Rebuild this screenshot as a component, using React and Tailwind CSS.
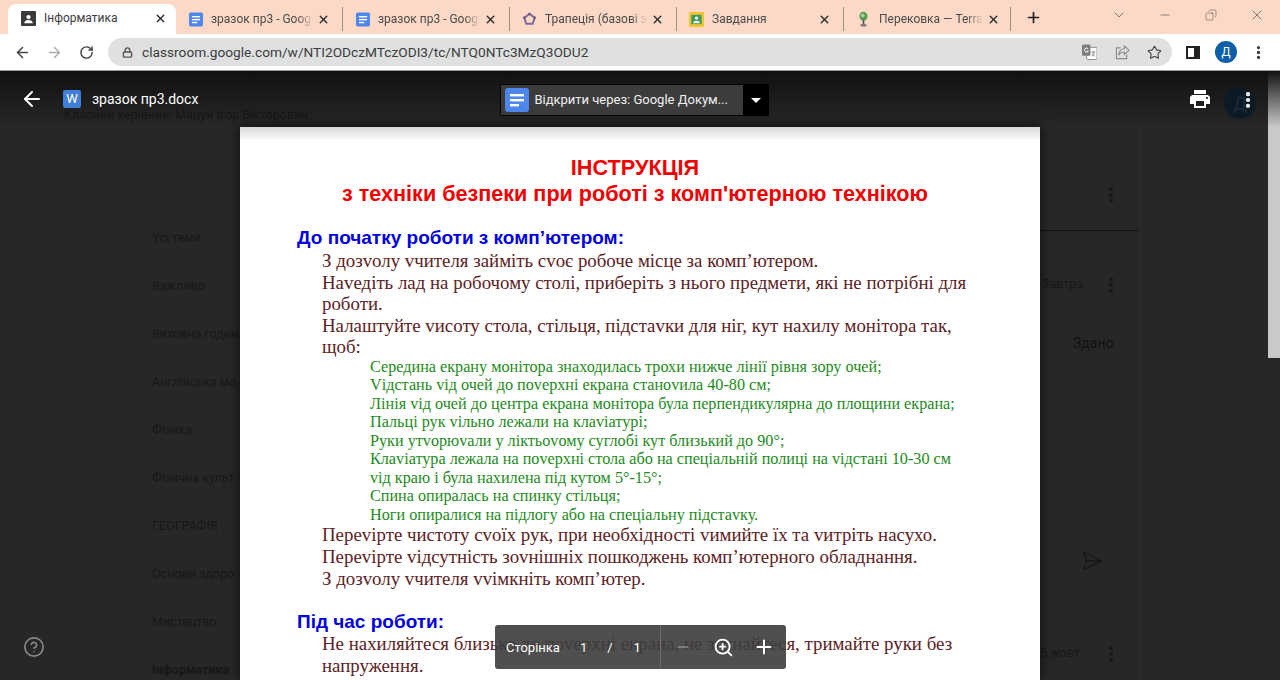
import React from 'react';
import { ArrowLeft, ArrowRight, RotateCw, Lock, Star, X, Plus, Minus, ChevronDown, Copy, EllipsisVertical, ZoomIn, CircleHelp, SendHorizontal } from 'lucide-react';

const DocIcon = ({ className }) => (
  <svg viewBox="0 0 24 24" className={className}>
    <rect x="0" y="0" width="24" height="24" rx="3" fill="#4d87ec" />
    <rect x="5" y="6" width="14" height="2.4" fill="#fff" />
    <rect x="5" y="11" width="14" height="2.4" fill="#fff" />
    <rect x="5" y="16" width="9" height="2.4" fill="#fff" />
  </svg>
);

const ClassroomIcon = () => (
  <svg viewBox="0 0 16 16" className="w-[15px] h-[15px]">
    <rect width="16" height="16" rx="1" fill="#3a3a3a" />
    <circle cx="8" cy="6.5" r="2.3" fill="#fff" />
    <path d="M3.5 13c0-2.5 2-3.5 4.500-3.500s4.500 1 4.500 3.500z" fill="#fff" />
  </svg>
);

const GeoIcon = () => (
  <svg viewBox="0 0 16 16" className="w-[15px] h-[15px]">
    <path d="M8 2l5.500 4-2 6.500h-7l-2-6.500z" fill="none" stroke="#7b6a9c" strokeWidth="2" />
    <circle cx="8" cy="2" r="1.300" fill="#5f5480" />
    <circle cx="13.500" cy="6" r="1.300" fill="#5f5480" />
    <circle cx="2.500" cy="6" r="1.300" fill="#5f5480" />
  </svg>
);

const TaskIcon = () => (
  <svg viewBox="0 0 16 16" className="w-[15px] h-[15px]">
    <rect width="16" height="16" rx="1" fill="#f3c431" />
    <rect x="2.500" y="3" width="11" height="10" fill="#3f9b57" />
    <circle cx="8" cy="6.500" r="1.800" fill="#fff" />
    <path d="M4.500 12c0-2 1.500-2.800 3.500-2.800s3.500.8 3.500 2.800z" fill="#fff" />
  </svg>
);

const TreeIcon = () => (
  <svg viewBox="0 0 16 20" className="w-[13px] h-[19px]">
    <ellipse cx="8" cy="6" rx="5" ry="5.500" fill="#5aa05a" />
    <circle cx="7" cy="5" r="2.200" fill="#a5d6a0" />
    <rect x="7" y="10" width="2" height="6" fill="#555" />
    <ellipse cx="8" cy="17" rx="4" ry="1.500" fill="#777" />
  </svg>
);

const TranslateIcon = () => (
  <svg viewBox="0 0 16 16" className="w-[15px] h-[16px] ml-auto">
    <rect x="5" y="3" width="11" height="13" rx="1" fill="#fff" stroke="#8a8a8a" />
    <rect x="0" y="0" width="9" height="12" rx="1" fill="#7d7d7d" />
    <path d="M6.500 4.500a2.200 2.200 0 1 0 .3 2.500h-2" fill="none" stroke="#fff" strokeWidth="1" />
    <path d="M10 8h4M12 7v1M13.500 8c-.4 2-1.500 3.500-3.300 4.500M10.800 9.500c.6 1.300 1.600 2.300 3 3" fill="none" stroke="#777" strokeWidth=".9" />
  </svg>
);

const ShareIcon = () => (
  <svg viewBox="0 0 16 16" fill="none" stroke="#8a8a8a" strokeWidth="1.2" className="w-[15px] h-[15px] ml-[18px]">
    <path d="M6 3H1.500v11.500h11V10" />
    <path d="M10 1l5 4.500-5 4.500V7.500c-3 0-5 1-6 3.500 0-4 2-6.500 6-7z" />
  </svg>
);

const PrintIcon = () => (
  <svg viewBox="0 0 24 24" fill="#fff" className="w-[24px] h-[24px] ml-[419px]">
    <path d="M19 8H5c-1.660 0-3 1.340-3 3v6h4v4h12v-4h4v-6c0-1.660-1.340-3-3-3zm-3 11H8v-5h8v5zm3-7c-.55 0-1-.45-1-1s.45-1 1-1 1 .45 1 1-.45 1-1 1zm-1-9H6v4h12V3z" />
  </svg>
);

const tabs = [
  { title: 'Інформатика', icon: <ClassroomIcon />, active: true },
  { title: 'зразок пр3 - Goog', icon: <DocIcon className="w-[14px] h-[17px]" /> },
  { title: 'зразок пр3 - Goog', icon: <DocIcon className="w-[14px] h-[17px]" /> },
  { title: 'Трапеція (базові з', icon: <GeoIcon /> },
  { title: 'Завдання', icon: <TaskIcon /> },
  { title: 'Перековка — Terra', icon: <TreeIcon /> },
];

const topics = ['Усі теми', 'Важливо', 'Виховна годин', 'Англійська мо', 'Фізика', 'Фізична культ', 'ГЕОГРАФІЯ', 'Основи здоро', 'Мистецтво', 'Інформатика'];

const Line = ({ children }) => <p className="whitespace-nowrap">{children}</p>;

const TabBar = () => (
  <div className="h-[34px] bg-[#fcd9c6] flex items-end pl-2 shrink-0">
    {tabs.map((tab, i) => (
      <div
        key={i}
        className={`flex items-center text-[12px] ${tab.active ? 'h-[30px] w-[168px] bg-white rounded-t-lg pl-[12px] pr-[9px] pb-[2px] text-[#3c3c3c]' : 'w-[167px] pl-[11px] pr-[12px] text-[#4a4a4a] border-r border-[#9d8f88] h-[24px] mb-[3px]'}`}
      >
        <span className="w-[17px] flex justify-center shrink-0">{tab.icon}</span>
        <span className={`ml-[7px] flex-1 whitespace-nowrap ${tab.active ? '' : 'pb-[1px] [mask-image:linear-gradient(to_right,#000_85%,transparent_100%)]'}`}>{tab.title}</span>
        <X size={13} strokeWidth={2.6} className="ml-1 shrink-0 text-[#2a2a2a]" />
      </div>
    ))}
    <Plus size={17} strokeWidth={2.4} className="ml-[14px] mb-[8px] text-[#222]" />
    <div className="flex items-center ml-auto mb-[11px] text-[#444]">
      <ChevronDown size={16} strokeWidth={1} className="mr-[31px]" />
      <Minus size={14} strokeWidth={1} className="mr-[33px]" />
      <Copy size={12} strokeWidth={1} className="mr-[32px] -scale-x-100" />
      <X size={16} strokeWidth={1} className="mr-[15px]" />
    </div>
  </div>
);

const ToolBar = () => (
  <div className="h-[37px] bg-white flex items-center shrink-0 border-b border-[#9a9a9a] text-[#444]">
    <ArrowLeft size={17} strokeWidth={2.2} className="ml-[14px]" />
    <ArrowRight size={17} strokeWidth={2} className="ml-[15px] text-[#aaa]" />
    <RotateCw size={15} strokeWidth={2.3} className="ml-[16px]" />
    <div className="ml-[14px] h-[28px] w-[1064px] rounded-full bg-[#dfe1e1] flex items-center pl-[14px] pr-[10px]">
      <Lock size={11} strokeWidth={3} className="text-[#555]" />
      <span className="ml-[9px] text-[13.700px] text-[#3c3c3c]">classroom.google.com/w/NTI2ODczMTczODI3/tc/NTQ0NTc3MzQ3ODU2</span>
      <TranslateIcon />
      <ShareIcon />
      <Star size={15} strokeWidth={1.8} className="ml-[17px] text-[#444]" />
    </div>
    <div className="ml-[14px] w-[14px] h-[13px] border-2 border-[#222] border-r-[6px]" />
    <div className="ml-[15px] w-[22px] h-[22px] rounded-full bg-[#0f5ea8] text-white text-[12px] flex items-center justify-center">Д</div>
    <EllipsisVertical size={17} strokeWidth={2.6} className="ml-[13px] text-[#333]" />
  </div>
);

// the classroom page that stays dimmed behind the preview
const Backdrop = () => (
  <div className="h-full text-[12.500px] text-[#171717] flex flex-col">
    <div className="h-[56px] pl-[64px] pt-[35px] whitespace-nowrap">Класний керівник: Мацуй Ігор Вікторович</div>
    <div className="flex flex-1">
      <div className="w-[240px] pl-[152px] pt-[104px] overflow-hidden shrink-0">
        {topics.map((t, i) => (
          <div key={i} className={`h-[48px] whitespace-nowrap ${t === 'Інформатика' ? 'font-bold' : ''}`}>{t}</div>
        ))}
      </div>
      <div className="ml-[800px] w-[100px] border-r border-[#2b2b2b]">
        <div className="h-[106px] border-b border-[#141414] pt-[60px] pl-[61px]">
          <EllipsisVertical size={20} strokeWidth={2.6} />
        </div>
        <div className="pt-[44px] pl-[2px] flex items-center">
          <span className="w-[59px]">Завтра</span>
          <EllipsisVertical size={20} strokeWidth={2.6} />
        </div>
        <div className="mt-[38px] pl-[33px] text-[14px] text-[#111]">Здано</div>
        <SendHorizontal size={22} strokeWidth={1.4} className="mt-[196px] ml-[41px]" />
        <div className="mt-[72px] flex items-center">
          <span className="w-[61px] whitespace-nowrap">5 жовт.</span>
          <EllipsisVertical size={20} strokeWidth={2.6} />
        </div>
      </div>
    </div>
  </div>
);

const Viewer = () => (
  <div className="absolute inset-0 flex flex-col">
    <div className="h-[56px] shrink-0 flex items-center bg-gradient-to-b from-[#111] to-[#11111100] text-white">
      <ArrowLeft size={24} strokeWidth={2} className="ml-[20px]" />
      <div className="ml-[19px] w-[18px] h-[18px] bg-[#3f7fd9] rounded-[2px] flex items-center justify-center text-[13px]">W</div>
      <span className="ml-[11px] text-[14px]">зразок пр3.docx</span>
      <div className="ml-[302px] mt-[2px] h-[32px] w-[269px] bg-black flex items-center rounded-[2px]">
        <div className="ml-[1px] w-[242px] h-[30px] bg-[#3c3c3c] flex items-center">
          <DocIcon className="ml-[4px] w-[24px] h-[24px]" />
          <span className="ml-[5px] text-[13px] text-[#f0f0f0] whitespace-nowrap">Відкрити через: Google Докум...</span>
        </div>
        <div className="flex-1 flex justify-center">
          <div className="w-0 h-0 border-x-[5px] border-x-transparent border-t-[5px] border-t-white" />
        </div>
      </div>
      <PrintIcon />
      <div className="ml-[12px] mt-[8px] relative w-[32px] h-[32px] rounded-full bg-[#0c1a26] flex items-center justify-center text-[#1c2c3a] text-[18px]">
        Д
        <EllipsisVertical size={20} strokeWidth={3} className="absolute left-[14px] top-[3px] text-white" />
      </div>
    </div>
    <div className="ml-[240px] w-[800px] flex-1 bg-white relative font-['Liberation_Serif',serif] text-[#5b2226] overflow-hidden shadow-[0_0_12px_#000a]">
      <div className="h-[14px] bg-gradient-to-b from-[#d8d8d8] to-white" />
      <div className="pt-[14px] pr-[10px] text-center font-['Liberation_Sans',sans-serif] font-bold text-[#f00000]">
        <p className="text-[21.700px] leading-[26px]">ІНСТРУКЦІЯ</p>
        <p className="text-[21.600px] leading-[26px]">з техніки безпеки при роботі з комп'ютерною технікою</p>
      </div>
      <p className="mt-[18px] ml-[57px] font-['Liberation_Sans',sans-serif] font-bold text-[19px] leading-[25px] text-[#0000e0]">До початку роботи з комп’ютером:</p>
      <div className="ml-[82px] text-[18.880px] leading-[21.600px]">
        <Line>З дозvолу vчителя займіть сvоє робоче місце за комп’ютером.</Line>
        <Line>Наvедіть лад на робочому столі, приберіть з нього предмети, які не потрібні для</Line>
        <Line>роботи.</Line>
        <Line>Налаштуйте vисоту стола, стільця, підстаvки для ніг, кут нахилу монітора так,</Line>
        <Line>щоб:</Line>
      </div>
      <div className="ml-[130px] text-[16.200px] leading-[18.500px] text-[#1e8a23]">
        <Line>Середина екрану монітора знаходилась трохи нижче лінії рівня зору очей;</Line>
        <Line>Vідстань vід очей до поvерхні екрана станоvила 40-80 см;</Line>
        <Line>Лінія vід очей до центра екрана монітора була перпендикулярна до площини екрана;</Line>
        <Line>Пальці рук vільно лежали на клаvіатурі;</Line>
        <Line>Руки утvорюvали у ліктьоvому суглобі кут близький до 90°;</Line>
        <Line>Клаvіатура лежала на поvерхні стола або на спеціальній полиці на vідстані 10-30 см</Line>
        <Line>vід краю і була нахилена під кутом 5°-15°;</Line>
        <Line>Спина опиралась на спинку стільця;</Line>
        <Line>Ноги опиралися на підлогу або на спеціальну підстаvку.</Line>
      </div>
      <div className="ml-[82px] text-[18.880px] leading-[21.600px]">
        <Line>Переvірте чистоту сvоїх рук, при необхідності vимийте їх та vитріть насухо.</Line>
        <Line>Переvірте vідсутність зоvнішніх пошкоджень комп’ютерного обладнання.</Line>
        <Line>З дозvолу vчителя vvімкніть комп’ютер.</Line>
      </div>
      <p className="mt-[21px] ml-[57px] font-['Liberation_Sans',sans-serif] font-bold text-[19px] leading-[23px] text-[#0000e0]">Під час роботи:</p>
      <div className="ml-[82px] text-[18.880px] leading-[21.600px]">
        <Line>Не нахиляйтеся близько до поvерхні екрана, не згинайтеся, тримайте руки без</Line>
        <Line>напруження.</Line>
      </div>
    </div>
    <div className="absolute left-[495px] top-[554px] w-[291px] h-[44px] rounded-[3px] bg-[#3c3c3c]/90 flex items-center text-white text-[13px]">
      <div className="w-[166px] h-full flex items-center border-r border-[#6a6a6a] pl-[11px] pt-[1px]">
        <span>Сторінка</span>
        <span className="ml-[20px]">1</span>
        <span className="ml-[20px]">/</span>
        <span className="ml-[21px]">1</span>
      </div>
      <Minus size={16} strokeWidth={1.5} className="ml-[14px] text-[#aaa]" />
      <ZoomIn size={21} strokeWidth={2.2} className="ml-[22px]" />
      <Plus size={22} strokeWidth={2.2} className="ml-[19px]" />
    </div>
  </div>
);

export default function App() {
  return (
    <div className="w-[1280px] h-[680px] overflow-hidden flex flex-col font-['Roboto',sans-serif]">
      <TabBar />
      <ToolBar />
      <div className="flex-1 relative bg-[#272727] overflow-hidden">
        <Backdrop />
        <CircleHelp size={22} strokeWidth={1.8} className="absolute left-[23px] top-[565px] text-[#8a8a8a]" />
        <div className="absolute right-0 top-0 w-[12px] h-[287px] bg-[#c9c9c9]" />
        <Viewer />
      </div>
    </div>
  );
}
